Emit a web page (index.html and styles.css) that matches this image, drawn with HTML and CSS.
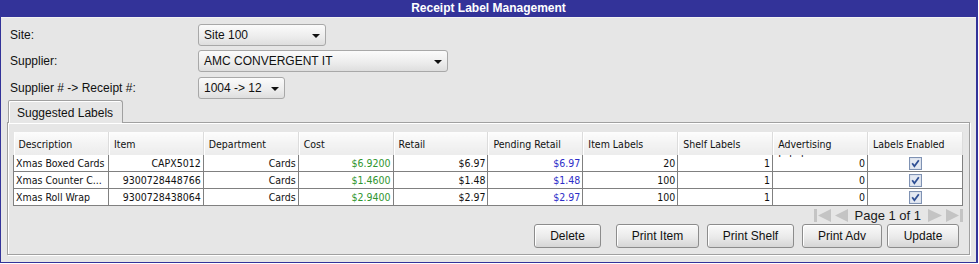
FILE: index.html
```html
<!DOCTYPE html>
<html lang="en">
<head>
  <meta charset="UTF-8">
  <title>Receipt Label Management</title>
  <link rel="stylesheet" href="styles.css">
</head>
<body>
  <div class="window">
    <div class="titlebar">Receipt Label Management</div>
    <div class="content">
      <div class="form">
        <label>Site:</label>
        <div class="combo combo-site"><span>Site 100</span><i class="arrow"></i></div>
        <label>Supplier:</label>
        <div class="combo combo-supplier"><span>AMC CONVERGENT IT</span><i class="arrow"></i></div>
        <label class="lbl-receipt">Supplier # -&gt; Receipt #:</label>
        <div class="combo combo-receipt"><span>1004 -&gt; 12</span><i class="arrow"></i></div>
      </div>

      <div class="tabs">
        <div class="tab">Suggested Labels</div>
      </div>
      <div class="tab-panel">
        <table class="grid">
          <thead>
            <tr>
              <th><div class="hdr">Description</div></th>
              <th><div class="hdr">Item</div></th>
              <th><div class="hdr">Department</div></th>
              <th><div class="hdr">Cost</div></th>
              <th><div class="hdr">Retail</div></th>
              <th><div class="hdr">Pending Retail</div></th>
              <th><div class="hdr">Item Labels</div></th>
              <th><div class="hdr">Shelf Labels</div></th>
              <th><div class="hdr hdr-wrap">Advertising Labels</div></th>
              <th><div class="hdr">Labels Enabled</div></th>
            </tr>
          </thead>
          <tbody>
            <tr>
              <td class="left">Xmas Boxed Cards</td>
              <td>CAPX5012</td>
              <td>Cards</td>
              <td class="cost">$6.9200</td>
              <td>$6.97</td>
              <td class="pending">$6.97</td>
              <td>20</td>
              <td>1</td>
              <td>0</td>
              <td class="center"><svg class="check" width="13" height="13" viewBox="0 0 13 13"><rect x="0.5" y="0.5" width="12" height="12" fill="#d4dbe8" stroke="#7f92b3"/><rect x="1.5" y="1.5" width="10" height="10" fill="#e4e9f2"/><path d="M3.2 6.2 L5.4 9.2 L9.8 3.2" fill="none" stroke="#2f4f94" stroke-width="1.8"/></svg></td>
            </tr>
            <tr>
              <td class="left">Xmas Counter C...</td>
              <td>9300728448766</td>
              <td>Cards</td>
              <td class="cost">$1.4600</td>
              <td>$1.48</td>
              <td class="pending">$1.48</td>
              <td>100</td>
              <td>1</td>
              <td>0</td>
              <td class="center"><svg class="check" width="13" height="13" viewBox="0 0 13 13"><rect x="0.5" y="0.5" width="12" height="12" fill="#d4dbe8" stroke="#7f92b3"/><rect x="1.5" y="1.5" width="10" height="10" fill="#e4e9f2"/><path d="M3.2 6.2 L5.4 9.2 L9.8 3.2" fill="none" stroke="#2f4f94" stroke-width="1.8"/></svg></td>
            </tr>
            <tr>
              <td class="left">Xmas Roll Wrap</td>
              <td>9300728438064</td>
              <td>Cards</td>
              <td class="cost">$2.9400</td>
              <td>$2.97</td>
              <td class="pending">$2.97</td>
              <td>100</td>
              <td>1</td>
              <td>0</td>
              <td class="center"><svg class="check" width="13" height="13" viewBox="0 0 13 13"><rect x="0.5" y="0.5" width="12" height="12" fill="#d4dbe8" stroke="#7f92b3"/><rect x="1.5" y="1.5" width="10" height="10" fill="#e4e9f2"/><path d="M3.2 6.2 L5.4 9.2 L9.8 3.2" fill="none" stroke="#2f4f94" stroke-width="1.8"/></svg></td>
            </tr>
          </tbody>
        </table>

        <div class="pager">
          <svg width="17" height="13" viewBox="0 0 17 13"><rect x="0" y="0" width="3" height="13" fill="#c4c4c4"/><path d="M17 0 L4 6.5 L17 13 Z" fill="#c4c4c4"/></svg>
          <svg width="13" height="13" viewBox="0 0 13 13"><path d="M13 0 L0 6.5 L13 13 Z" fill="#c4c4c4"/></svg>
          <span class="page-text">Page 1 of 1</span>
          <svg width="14" height="13" viewBox="0 0 14 13"><path d="M0 0 L14 6.5 L0 13 Z" fill="#c4c4c4"/></svg>
          <svg width="17" height="13" viewBox="0 0 17 13"><path d="M0 0 L13 6.5 L0 13 Z" fill="#c4c4c4"/><rect x="14" y="0" width="3" height="13" fill="#c4c4c4"/></svg>
        </div>

        <div class="buttons">
          <button class="btn btn-delete">Delete</button>
          <button class="btn btn-item">Print Item</button>
          <button class="btn btn-shelf">Print Shelf</button>
          <button class="btn btn-adv">Print Adv</button>
          <button class="btn btn-update">Update</button>
        </div>
      </div>
    </div>
  </div>
</body>
</html>
```

FILE: styles.css
```css
body {
  margin: 0;
  background-color: #fff;
  font-family: "Liberation Sans", Arial, sans-serif;
  font-size: 12px;
  color: #111;
}
.window {
  width: 975px;
  height: 262px;
  border-left: 1px solid #333399;
  border-right: 2px solid #333399;
  border-bottom: 1px solid #333399;
  background-color: #e6e6e6;
  display: flex;
  flex-direction: column;
}
.titlebar {
  height: 17px;
  line-height: 17px;
  background-color: #333399;
  color: #fff;
  font-weight: bold;
  text-align: center;
  border-bottom: 1px solid #f2f2f2;
}
.content {
  padding: 6px 6px 0 6px;
}
.form {
  display: grid;
  grid-template-columns: 188px auto;
  row-gap: 4px;
  align-items: center;
  padding-left: 3px;
}
.form label {
  line-height: 22px;
}
.lbl-receipt,
.combo-receipt {
  margin-top: 1px;
}
.combo {
  height: 22px;
  box-sizing: border-box;
  border: 1px solid #a8a8a8;
  border-radius: 3px;
  background: linear-gradient(#fbfbfb, #ececec 60%, #dedede);
  display: flex;
  align-items: center;
  justify-content: space-between;
  padding: 0 5px 0 5px;
}
.combo-site { width: 128px; }
.combo-supplier { width: 250px; }
.combo-receipt { width: 87px; }
.arrow {
  width: 0;
  height: 0;
  border-left: 4px solid transparent;
  border-right: 4px solid transparent;
  border-top: 4px solid #111;
  margin-top: 1px;
}
.tabs {
  display: flex;
  margin-top: 1px;
  padding-left: 1px;
  height: 22px;
}
.tab {
  width: 115px;
  box-sizing: border-box;
  border: 1px solid #a0a0a0;
  border-bottom: none;
  border-radius: 2px 3px 0 0;
  box-shadow: inset 1px 1px #fff;
  padding: 5px 0 0 8px;
  background-color: #e6e6e6;
  position: relative;
  z-index: 1;
  margin-bottom: -1px;
  height: 23px;
}
.tab-panel {
  height: 133px;
  box-sizing: border-box;
  border: 1px solid #a0a0a0;
  box-shadow: inset 1px 1px #fff, 1px 1px #fff;
  padding: 9px 5px 0 5px;
  width: 963px;
}
.grid {
  border-collapse: collapse;
  table-layout: fixed;
  width: 950px;
  font-family: "DejaVu Sans Condensed", "DejaVu Sans", sans-serif;
  font-size: 10.5px;
  color: #111;
}
.grid th {
  padding: 0;
  height: 23px;
  text-align: left;
  font-weight: normal;
  vertical-align: top;
  background: linear-gradient(#fdfdfd, #f3f3f3 50%, #ececec);
  border-right: 1px solid #dcdcdc;
  box-shadow: inset 1px 0 #fff;
}
.hdr {
  height: 25px;
  margin-bottom: -2px;
  padding: 5px 4px 0 5px;
  box-sizing: border-box;
  line-height: 15px;
  overflow: hidden;
  white-space: nowrap;
}
.hdr-wrap {
  white-space: normal;
  width: 80px;
}
.grid td {
  height: 16px;
  padding: 0 2px 0 2px;
  border: 1px solid #808080;
  border-top: none;
  background-color: #fff;
  text-align: right;
  white-space: nowrap;
  overflow: hidden;
  line-height: 16px;
}
.grid td.left { text-align: left; }
.grid td.center { text-align: center; }
.grid td.cost { color: #2f962f; }
.grid td.pending { color: #2e2ec8; }
.check {
  display: block;
  margin: 1px auto 0;
}
.pager {
  height: 18px;
  display: flex;
  align-items: center;
  justify-content: flex-end;
  gap: 4px;
  padding-right: 1px;
}
.page-text {
  font-size: 13px;
  color: #1a1a1a;
  margin: 0 3px;
}
.buttons {
  display: flex;
  justify-content: flex-end;
  gap: 8px;
  padding-right: 5px;
}
.btn {
  height: 24px;
  border: 1px solid #8c8c8c;
  border-radius: 3px;
  background: linear-gradient(#fafafa, #eaeaea 55%, #d6d6d6);
  font-family: "Liberation Sans", Arial, sans-serif;
  font-size: 12px;
  color: #111;
  padding: 0;
  box-shadow: inset 1px 1px #fff;
}
.btn-delete { width: 67px; margin-right: 7px; }
.btn-item { width: 83px; }
.btn-shelf { width: 87px; }
.btn-adv { width: 80px; margin-right: -3px; }
.btn-update { width: 72px; }
```
